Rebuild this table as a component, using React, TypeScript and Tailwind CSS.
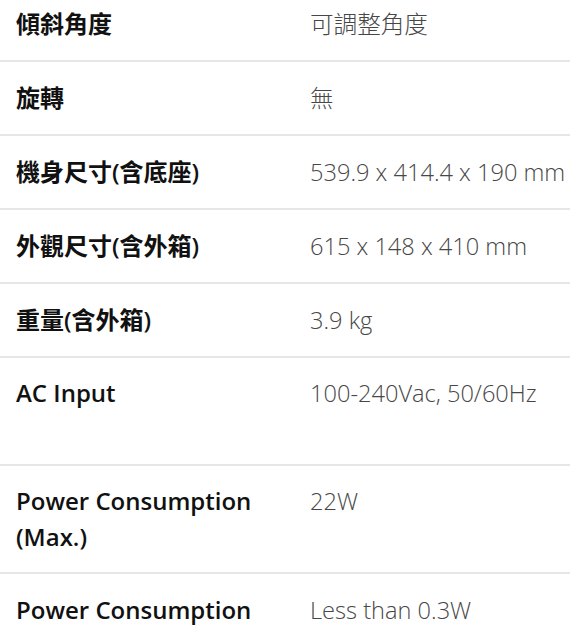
const rows: { label: string; value: string; tall?: boolean }[] = [
  { label: "傾斜角度", value: "可調整角度" },
  { label: "旋轉", value: "無" },
  { label: "機身尺寸(含底座)", value: "539.9 x 414.4 x 190 mm" },
  { label: "外觀尺寸(含外箱)", value: "615 x 148 x 410 mm" },
  { label: "重量(含外箱)", value: "3.9 kg" },
  { label: "AC Input", value: "100-240Vac, 50/60Hz", tall: true },
  { label: "Power Consumption (Max.)", value: "22W", tall: true },
  { label: "Power Consumption", value: "Less than 0.3W" },
];

export default function App() {
  return (
    <div
      className="w-[570px] h-[630px] overflow-hidden bg-white"
      style={{ fontFamily: '"Open Sans", "Noto Sans CJK TC", sans-serif' }}
    >
      <div className="-mt-[12px]">
        {rows.map((row, i) => (
          <div
            key={i}
            className={
              row.tall
                ? "grid grid-cols-[310px_1fr] border-b-2 border-[#e6e6e6] py-[17px] leading-[36px]"
                : "grid grid-cols-[310px_1fr] border-b-2 border-[#e6e6e6] py-[18px] leading-[36px]"
            }
          >
            <div className="pl-4 pr-8 text-[24px] font-semibold text-[#111]">{row.label}</div>
            <div
              className={
                row.tall
                  ? "min-h-[72px] whitespace-nowrap text-[23.6px] font-light text-[#474747]"
                  : "whitespace-nowrap text-[23.6px] font-light text-[#474747]"
              }
            >
              {row.value}
            </div>
          </div>
        ))}
      </div>
    </div>
  );
}
